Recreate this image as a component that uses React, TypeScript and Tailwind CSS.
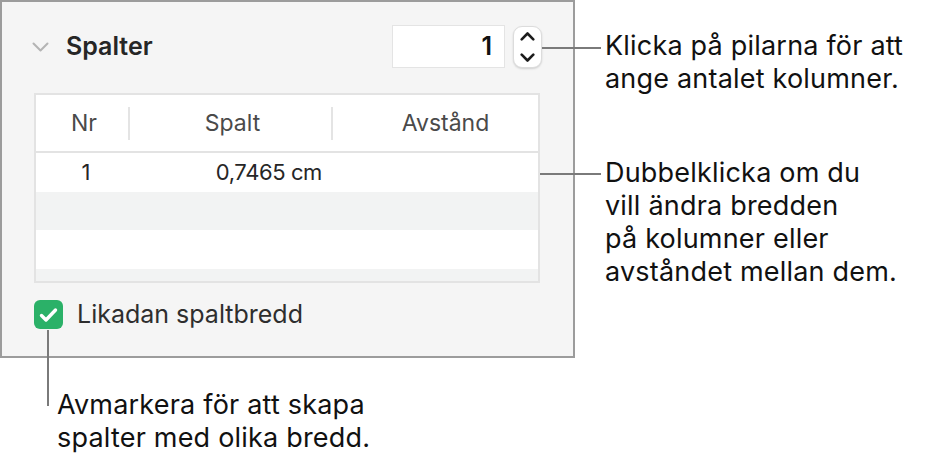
export default function App() {
  return (
    <div className="relative w-[928px] h-[463px] bg-white font-['Inter',sans-serif] text-[#111]">
      <div className="flex">
        <Panel />

        {/* Callouts on the right */}
        <div className="flex flex-col pl-[30px] pt-[29px] text-[27px] leading-[33px] tracking-[0.2px]">
          <div className="relative">
            <span className="absolute left-[-63px] top-[18px] h-[2px] w-[59px] bg-[#7a7a7a]" />
            <p>Klicka på pilarna för att</p>
            <p>ange antalet kolumner.</p>
          </div>
          <div className="relative mt-[61px]">
            <span className="absolute left-[-65px] top-[17px] h-[2px] w-[61px] bg-[#7a7a7a]" />
            <p>Dubbelklicka om du</p>
            <p>vill ändra bredden</p>
            <p>på kolumner eller</p>
            <p>avståndet mellan dem.</p>
          </div>
        </div>
      </div>

      {/* Bottom callout */}
      <div className="relative mt-[30px] pl-[57px] text-[27px] leading-[33px] tracking-[0.2px]">
        <span className="absolute left-[47px] top-[-58px] h-[76px] w-[2px] bg-[#7a7a7a]" />
        <p>Avmarkera för att skapa</p>
        <p>spalter med olika bredd.</p>
      </div>
    </div>
  );
}

function Panel() {
  return (
    <div className="flex h-[358px] w-[575px] shrink-0 flex-col border-2 border-[#9c9c9c] bg-[#f5f5f5] text-[#262626]">
      {/* Header */}
      <div className="mt-[23px] flex h-[43px] items-center pl-[30px] pr-[31px]">
        <svg width="17" height="10" viewBox="0 0 17 10" fill="none">
          <path d="M1.5 1.5l7 7 7-7" stroke="#b4b4b4" strokeWidth="2" strokeLinecap="round" strokeLinejoin="round" />
        </svg>
        <span className="ml-[17px] text-[25px] font-semibold">Spalter</span>
        <div className="flex-1" />
        <div className="flex h-[43px] w-[113px] items-center justify-end border border-[#e4e4e4] bg-white pr-[12px] text-[25px] font-semibold text-[#111]">
          1
        </div>
        <div className="ml-[8px] flex h-[42px] w-[29px] flex-col items-center justify-between rounded-[9px] border border-[#dcdcdc] bg-white py-[5px] shadow-[0_1px_2px_rgba(0,0,0,0.15)]">
          <svg width="15" height="9" viewBox="0 0 15 9" fill="none">
            <path d="M1.7 7.3l5.8-5.8 5.8 5.8" stroke="#1c1c1c" strokeWidth="2.6" strokeLinecap="round" strokeLinejoin="round" />
          </svg>
          <svg width="15" height="9" viewBox="0 0 15 9" fill="none">
            <path d="M1.7 1.7l5.8 5.8 5.8-5.8" stroke="#1c1c1c" strokeWidth="2.6" strokeLinecap="round" strokeLinejoin="round" />
          </svg>
        </div>
      </div>

      {/* Table */}
      <div className="ml-[32px] mt-[25px] flex h-[190px] w-[506px] flex-col overflow-hidden border-2 border-[#e3e3e3] bg-[#f2f3f3]">
        <div className="flex h-[58px] shrink-0 items-center border-b-2 border-[#e3e3e3] bg-white text-[23px] text-[#4a4a4a]">
          <div className="w-[92px] pl-[4px] text-center">Nr</div>
          <div className="h-[33px] w-[2px] bg-[#e4e4e4]" />
          <div className="w-[201px] pl-[4px] text-center">Spalt</div>
          <div className="h-[33px] w-[2px] bg-[#e4e4e4]" />
          <div className="flex-1 pl-[20px] text-center">Avstånd</div>
        </div>
        <div className="flex h-[39px] shrink-0 items-center bg-white text-[22px] text-[#262626]">
          <div className="w-[92px] pl-[8px] text-center">1</div>
          <div className="w-[203px] pr-[9px] text-right tracking-[-0.4px]">0,7465 cm</div>
        </div>
        <div className="h-[38px] shrink-0 bg-[#f2f3f3]" />
        <div className="h-[39px] shrink-0 bg-white" />
        <div className="flex-1 bg-[#f2f3f3]" />
      </div>

      {/* Checkbox */}
      <div className="ml-[32px] mt-[13px] flex items-center">
        <div className="flex h-[29px] w-[29px] items-center justify-center rounded-[6px] bg-[#2bb168]">
          <svg width="19" height="16" viewBox="0 0 19 16" fill="none">
            <path d="M2.5 8.5l4.5 4.5 9.5-10" stroke="white" strokeWidth="3.4" strokeLinecap="round" strokeLinejoin="round" />
          </svg>
        </div>
        <span className="ml-[14px] text-[25px] text-[#2e2e2e]">Likadan spaltbredd</span>
      </div>
    </div>
  );
}
